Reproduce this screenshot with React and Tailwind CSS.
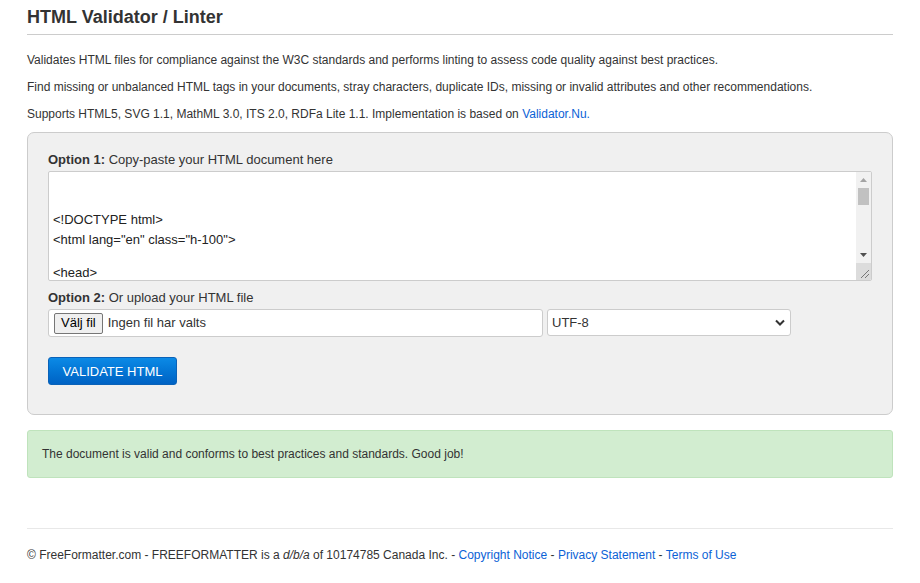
import React from 'react';

const App = () => {
    return (
        <div className="min-h-screen bg-white text-[#333] font-['Liberation_Sans',Arial,sans-serif] text-[12px]">
            <div className="mx-[27px] w-[866px]">
                {/* Heading */}
                <h1 className="pt-[6px] pb-[6px] text-[18px] font-bold leading-[22px] border-b border-[#ccc]">
                    HTML Validator / Linter
                </h1>

                {/* Intro */}
                <div className="pt-[16px] leading-[19px]">
                    <p className="mb-[8px]">Validates HTML files for compliance against the W3C standards and performs linting to assess code quality against best practices.</p>
                    <p className="mb-[8px]">Find missing or unbalanced HTML tags in your documents, stray characters, duplicate IDs, missing or invalid attributes and other recommendations.</p>
                    <p>
                        Supports HTML5, SVG 1.1, MathML 3.0, ITS 2.0, RDFa Lite 1.1. Implementation is based on{' '}
                        <a href="#" className="text-[#0b62d6]">Validator.Nu.</a>
                    </p>
                </div>

                {/* Form panel */}
                <div className="mt-[8px] h-[283px] bg-[#f0f0f0] border border-[#ccc] rounded-[7px] px-[20px] pt-[18px]">
                    <div className="text-[13px] leading-[17px]">
                        <span className="font-bold">Option 1:</span> Copy-paste your HTML document here
                    </div>
                    <div className="mt-[3px] h-[110px] bg-white border border-[#ccc] rounded-[2px] flex overflow-hidden">
                        <div className="flex-1 pl-[4px] pt-[38px] text-[13px] leading-[20px] text-[#222]">
                            <div>{'<!DOCTYPE html>'}</div>
                            <div>{'<html lang="en" class="h-100">'}</div>
                            <div className="h-[13px]"></div>
                            <div>{'<head>'}</div>
                        </div>
                        <div className="w-[15px] bg-[#f1f1f1] flex flex-col">
                            <div className="h-[16px] flex items-center justify-center">
                                <svg width="7" height="4" viewBox="0 0 7 4"><path d="M3.5 0L7 4H0z" fill="#a3a3a3" /></svg>
                            </div>
                            <div className="mx-[2px] h-[17px] bg-[#c1c1c1]"></div>
                            <div className="flex-1"></div>
                            <div className="h-[16px] flex items-center justify-center">
                                <svg width="7" height="4" viewBox="0 0 7 4"><path d="M0 0H7L3.5 4z" fill="#505050" /></svg>
                            </div>
                            <div className="h-[17px] bg-[#dcdcdc] flex items-end justify-end p-[2px]">
                                <svg width="9" height="9" viewBox="0 0 9 9">
                                    <path d="M9 1L1 9M9 5L5 9" stroke="#777" strokeWidth="1" />
                                </svg>
                            </div>
                        </div>
                    </div>

                    <div className="mt-[8px] text-[13px] leading-[17px]">
                        <span className="font-bold">Option 2:</span> Or upload your HTML file
                    </div>
                    <div className="mt-[3px] flex gap-[4px]">
                        <div className="w-[495px] h-[28px] bg-white border border-[#ccc] rounded-[3px] flex items-center pl-[5px] gap-[5px] text-[13px]">
                            <span className="h-[21px] px-[6px] flex items-center bg-[#efefef] border border-[#767676] rounded-[2px] text-black">Välj fil</span>
                            <span>Ingen fil har valts</span>
                        </div>
                        <div className="w-[244px] h-[27px] bg-white border border-[#ccc] rounded-[3px] flex items-center justify-between px-[4px] text-[13px]">
                            <span>UTF-8</span>
                            <svg width="10" height="7" viewBox="0 0 10 7" className="mr-[1px]">
                                <path d="M1 1.5L5 5.5L9 1.5" stroke="#333" strokeWidth="2" fill="none" />
                            </svg>
                        </div>
                    </div>

                    <button className="mt-[20px] h-[28px] w-[129px] rounded-[3px] border border-[#0a62b8] bg-gradient-to-b from-[#0c8ae6] to-[#0062c4] text-white text-[13px] leading-none">
                        VALIDATE HTML
                    </button>
                </div>

                {/* Result */}
                <div className="mt-[15px] h-[48px] bg-[#d2edd0] border border-[#bfe3bc] rounded-[3px] flex items-center px-[14px]">
                    The document is valid and conforms to best practices and standards. Good job!
                </div>

                {/* Footer */}
                <div className="mt-[50px] border-t border-[#e8e8e8] pt-[17px]">
                    © FreeFormatter.com - FREEFORMATTER is a <i>d/b/a</i> of 10174785 Canada Inc. -{' '}
                    <a href="#" className="text-[#0b62d6]">Copyright Notice</a> -{' '}
                    <a href="#" className="text-[#0b62d6]">Privacy Statement</a> -{' '}
                    <a href="#" className="text-[#0b62d6]">Terms of Use</a>
                </div>
            </div>
        </div>
    );
};

export default App;
